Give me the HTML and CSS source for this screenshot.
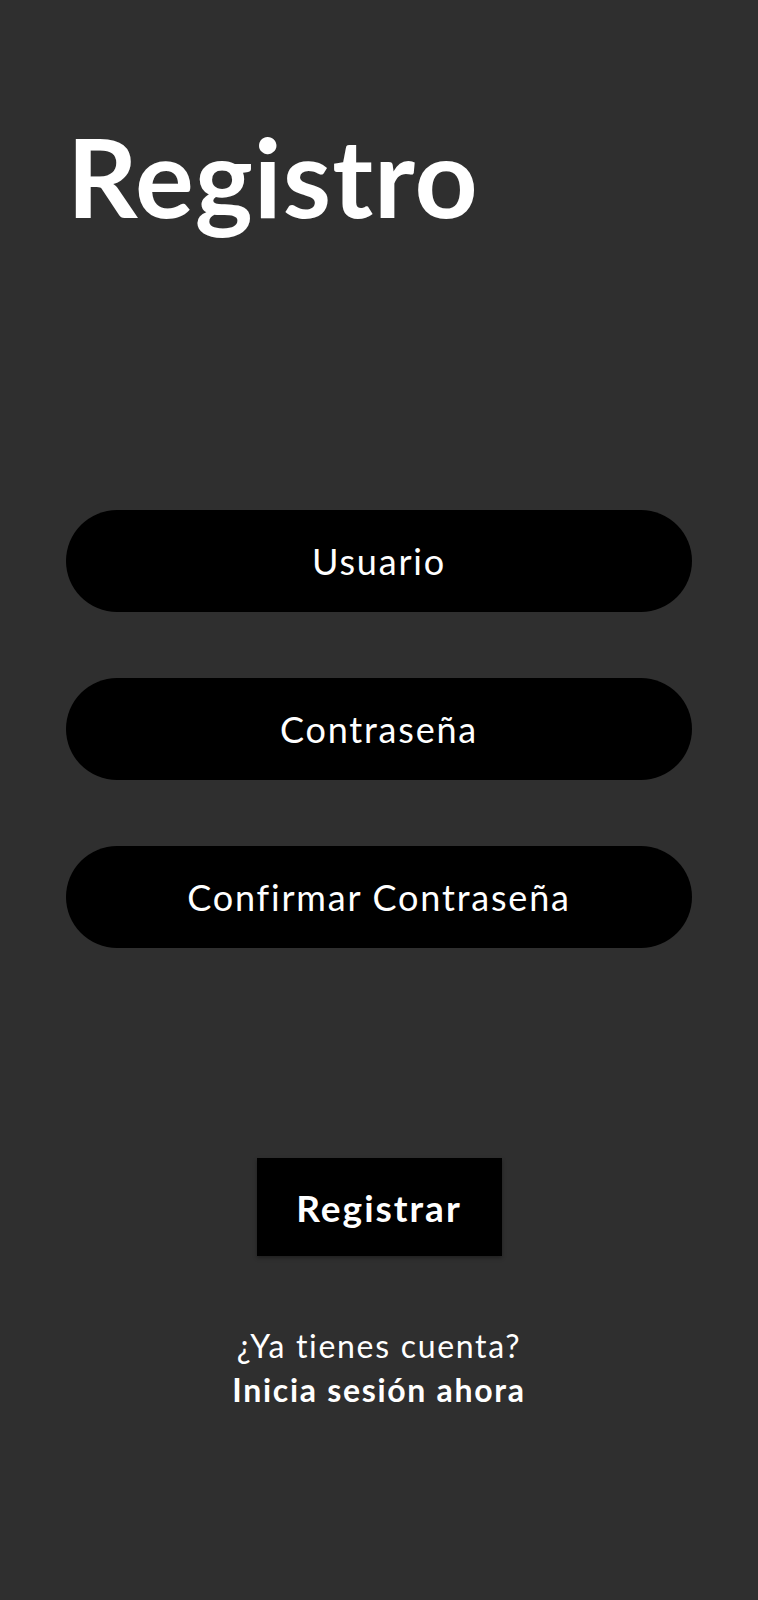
FILE: index.html
```html
<!DOCTYPE html>
<html lang="es">
<head>
<meta charset="utf-8">
<link rel="stylesheet" href="styles.css">
</head>
<body>
<main class="screen">
  <h1 class="title">Registro</h1>
  <form class="fields">
    <div class="field">Usuario</div>
    <div class="field">Contraseña</div>
    <div class="field">Confirmar Contraseña</div>
  </form>
  <button class="submit">Registrar</button>
  <p class="footer">
    <span class="question">¿Ya tienes cuenta?</span>
    <span class="link">Inicia sesión ahora</span>
  </p>
</main>
</body>
</html>
```
FILE: styles.css
```css
html, body {
  margin: 0;
  padding: 0;
  background: #2f2f2f;
}
.screen {
  width: 758px;
  height: 1600px;
  box-sizing: border-box;
  padding: 0 66px;
  display: flex;
  flex-direction: column;
  font-family: Lato, "Open Sans", sans-serif;
  font-variant-ligatures: none;
  color: #ffffff;
}
.title {
  margin: 110px 0 0 1px;
  font-size: 110px;
  font-weight: 700;
  line-height: 130px;
  letter-spacing: 1px;
}
.fields {
  margin-top: 270px;
  display: flex;
  flex-direction: column;
  gap: 66px;
}
.field {
  height: 102px;
  border-radius: 51px;
  background: #000;
  display: flex;
  align-items: center;
  justify-content: center;
  font-size: 36px;
  font-weight: 400;
  letter-spacing: 1.8px;
}
.submit {
  align-self: center;
  margin-top: 210px;
  width: 245px;
  height: 98px;
  border: none;
  background: #000;
  color: #fff;
  font-family: inherit;
  font-size: 37px;
  font-weight: 700;
  letter-spacing: 2px;
  box-shadow: 0 2px 4px rgba(0,0,0,0.35);
}
.footer {
  margin: 68px 0 0;
  display: flex;
  flex-direction: column;
  align-items: center;
  font-size: 32px;
  line-height: 44px;
  letter-spacing: 1.7px;
}
.link {
  font-weight: 700;
}
```
